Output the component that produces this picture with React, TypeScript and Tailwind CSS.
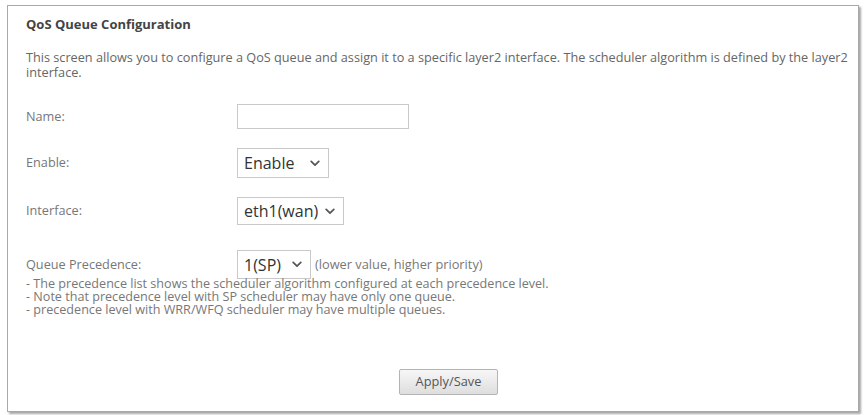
import React from "react";

const font = { fontFamily: '"Open Sans", "Noto Sans", Arial, sans-serif' };

function Chevron() {
  return (
    <svg width="10" height="7" viewBox="0 0 10 7" className="shrink-0">
      <path d="M1.2 1.4 L5 5.2 L8.8 1.4" fill="none" stroke="#555" strokeWidth="1.7" strokeLinecap="round" strokeLinejoin="round" />
    </svg>
  );
}

function FakeSelect({ value, width, height }: { value: string; width: string; height: string }) {
  return (
    <div className={`flex items-center justify-between border border-[#c9c9c9] bg-white pl-[6px] pr-[8px] text-[16px] text-[#333] ${width} ${height}`}>
      <span className="leading-none">{value}</span>
      <Chevron />
    </div>
  );
}

export default function App() {
  return (
    <div className="w-[865px] h-[415px] bg-white pt-[5px] pl-[7px]" style={font}>
      <div className="w-[852px] h-[407px] border border-[#a9a9a9] shadow-[2px_2px_2px_rgba(0,0,0,0.35)] bg-white pl-[18px] pr-[4px] pt-[11px] text-[12.7px] text-[#666]">
        <div className="leading-[15px] font-bold text-[#444] text-[13px]">QoS Queue Configuration</div>

        <p className="mt-[18px] leading-[15px]">
          This screen allows you to configure a QoS queue and assign it to a specific layer2 interface. The scheduler algorithm is defined by the layer2 interface.
        </p>

        <div className="mt-[24px] flex items-center h-[25px]">
          <span className="w-[211px] text-[#777]">Name:</span>
          <input type="text" className="w-[172px] h-[25px] border border-[#c9c9c9] bg-white outline-none" />
        </div>

        <div className="mt-[19px] flex items-center h-[30px]">
          <span className="w-[211px] text-[#777]">Enable:</span>
          <FakeSelect value="Enable" width="w-[92px]" height="h-[30px]" />
        </div>

        <div className="mt-[19px] flex items-center h-[28px]">
          <span className="w-[211px] text-[#777]">Interface:</span>
          <FakeSelect value="eth1(wan)" width="w-[107px]" height="h-[28px]" />
        </div>

        <div className="mt-[25px] flex items-center h-[29px]">
          <span className="w-[211px] text-[#777]">Queue Precedence:</span>
          <FakeSelect value="1(SP)" width="w-[74px]" height="h-[29px]" />
          <span className="ml-[4px] text-[#777] text-[12.8px]">(lower value, higher priority)</span>
        </div>

        <p className="mt-[-2px] leading-[13px] text-[12.6px] text-[#777]">
          - The precedence list shows the scheduler algorithm configured at each precedence level.
          <br />
          - Note that precedence level with SP scheduler may have only one queue.
          <br />
          - precedence level with WRR/WFQ scheduler may have multiple queues.
        </p>

        <div className="mt-[53px] pl-[373px]">
          <button className="w-[99px] h-[26px] border border-[#b4b4b4] rounded-[2px] bg-gradient-to-b from-[#f7f7f7] to-[#dedede] text-[12.8px] text-[#555]">
            Apply/Save
          </button>
        </div>
      </div>
    </div>
  );
}
